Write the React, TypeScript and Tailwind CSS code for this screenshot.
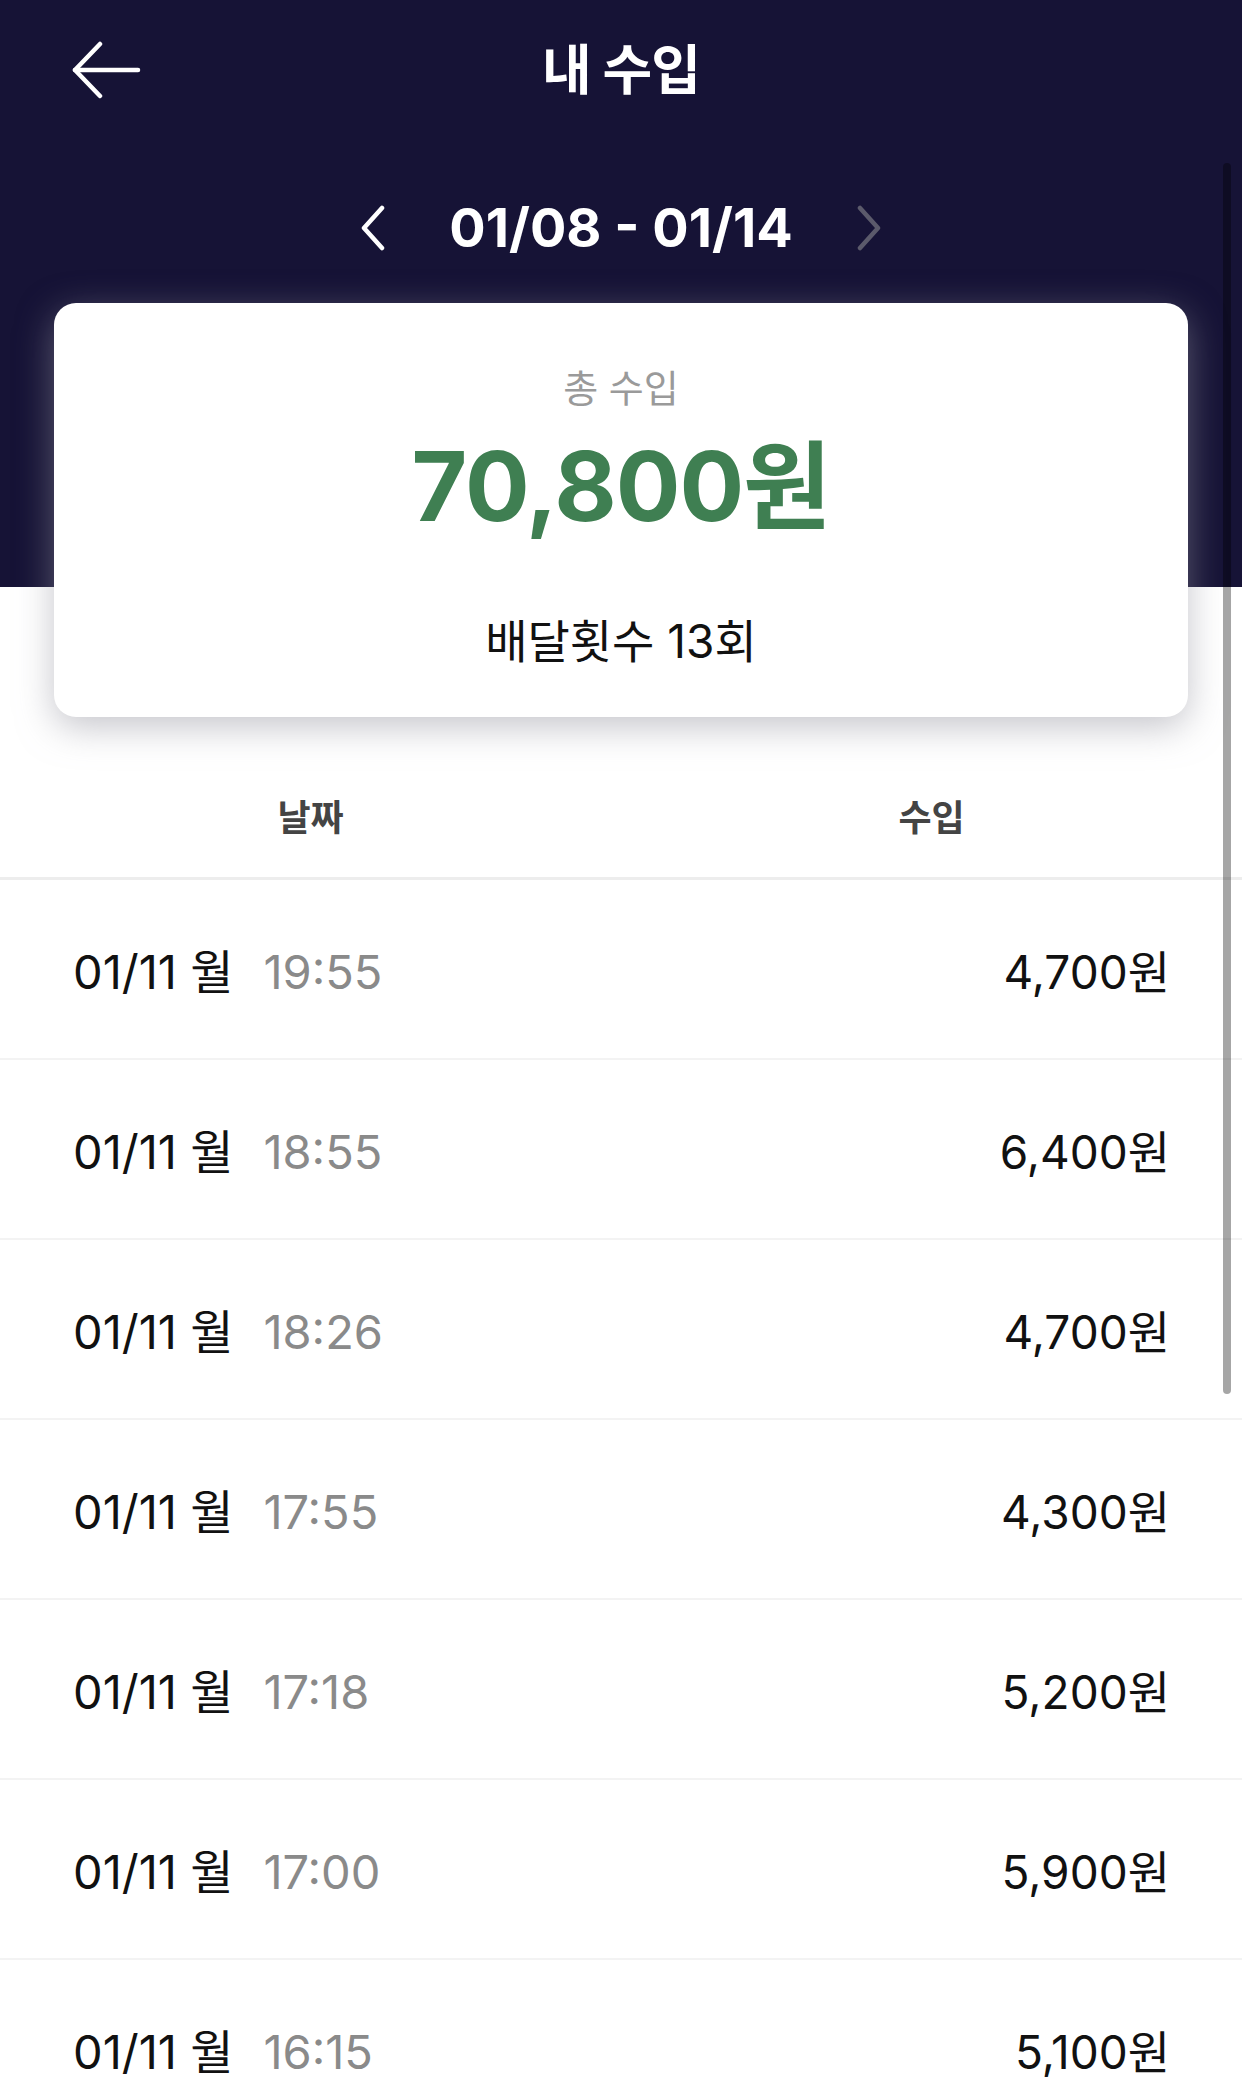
import { useState } from "react";

// Earnings list rows
const rows = [
  { date: "01/11 월", time: "19:55", amount: "4,700원" },
  { date: "01/11 월", time: "18:55", amount: "6,400원" },
  { date: "01/11 월", time: "18:26", amount: "4,700원" },
  { date: "01/11 월", time: "17:55", amount: "4,300원" },
  { date: "01/11 월", time: "17:18", amount: "5,200원" },
  { date: "01/11 월", time: "17:00", amount: "5,900원" },
  { date: "01/11 월", time: "16:15", amount: "5,100원" },
];

function BackArrow() {
  return (
    <svg width="72" height="58" viewBox="0 0 72 58" fill="none" stroke="white" strokeWidth="4.5" strokeLinecap="round" strokeLinejoin="round">
      <path d="M5 29 H68" />
      <path d="M30 3 L5 29 L30 55" />
    </svg>
  );
}

function Chevron({ dir, color }: { dir: "left" | "right"; color: string }) {
  return (
    <svg width="28" height="46" viewBox="0 0 28 46" fill="none" stroke={color} strokeWidth="4.5" strokeLinecap="round" strokeLinejoin="round">
      {dir === "left" ? <path d="M23 3 L5 23 L23 43" /> : <path d="M5 3 L23 23 L5 43" />}
    </svg>
  );
}

export default function App() {
  const [week] = useState("01/08 - 01/14");

  return (
    <div
      className="relative w-[1242px] min-h-[2091px] bg-[linear-gradient(to_bottom,#161336_587px,#ffffff_587px)]"
      style={{ fontFamily: '"Inter", "Noto Sans CJK KR", sans-serif' }}
    >
      {/* Top bar */}
      <div className="relative h-[140px] flex items-center justify-center">
        <button type="button" aria-label="Back" className="absolute left-[70px] top-[41px]">
          <BackArrow />
        </button>
        <h1 className="text-[54px] font-bold text-white tracking-[-1px]">내 수입</h1>
      </div>

      {/* Week navigation */}
      <div className="h-[163px] pt-[12px] flex items-center justify-center">
        <button type="button" aria-label="Previous week" className="mr-[62px]">
          <Chevron dir="left" color="#ffffff" />
        </button>
        <span className="text-[54px] font-bold text-white">{week}</span>
        <button type="button" aria-label="Next week" className="ml-[62px]">
          <Chevron dir="right" color="#5b5a6b" />
        </button>
      </div>

      {/* Summary card */}
      <div className="mx-[54px] h-[414px] rounded-[22px] bg-white shadow-[0_10px_36px_rgba(150,150,160,0.55)] flex flex-col items-center">
        <div className="mt-[61px] text-[38px] leading-[48px] text-[#9a9a9a]">총 수입</div>
        <div className="mt-[19px] text-[96px] leading-[110px] font-bold text-[#3f7f52] tracking-[-1px]">70,800원</div>
        <div className="mt-[72px] text-[46px] leading-[56px] text-[#111111]">배달횟수 13회</div>
      </div>

      {/* Table header */}
      <div className="h-[163px] grid grid-cols-2 items-center border-b-[3px] border-[#ededed] pt-[42px]">
        <div className="text-center text-[36px] font-bold text-[#444444]">날짜</div>
        <div className="text-center text-[36px] font-bold text-[#444444]">수입</div>
      </div>

      {/* Rows */}
      {rows.map((r, i) => (
        <div key={i} className="h-[180px] flex items-center justify-between pl-[73px] pr-[72px] border-b-2 border-[#f3f3f3] pt-[6px]">
          <div className="flex items-center text-[47px]">
            <span className="text-[#111111]">{r.date}</span>
            <span className="ml-[30px] text-[#8a8a8a]">{r.time}</span>
          </div>
          <span className="text-[46px] text-[#111111]">{r.amount}</span>
        </div>
      ))}

      {/* Scroll indicator */}
      <div className="absolute left-[1223px] top-[163px] w-[8px] h-[1231px] rounded-full bg-black/35" />
    </div>
  );
}
